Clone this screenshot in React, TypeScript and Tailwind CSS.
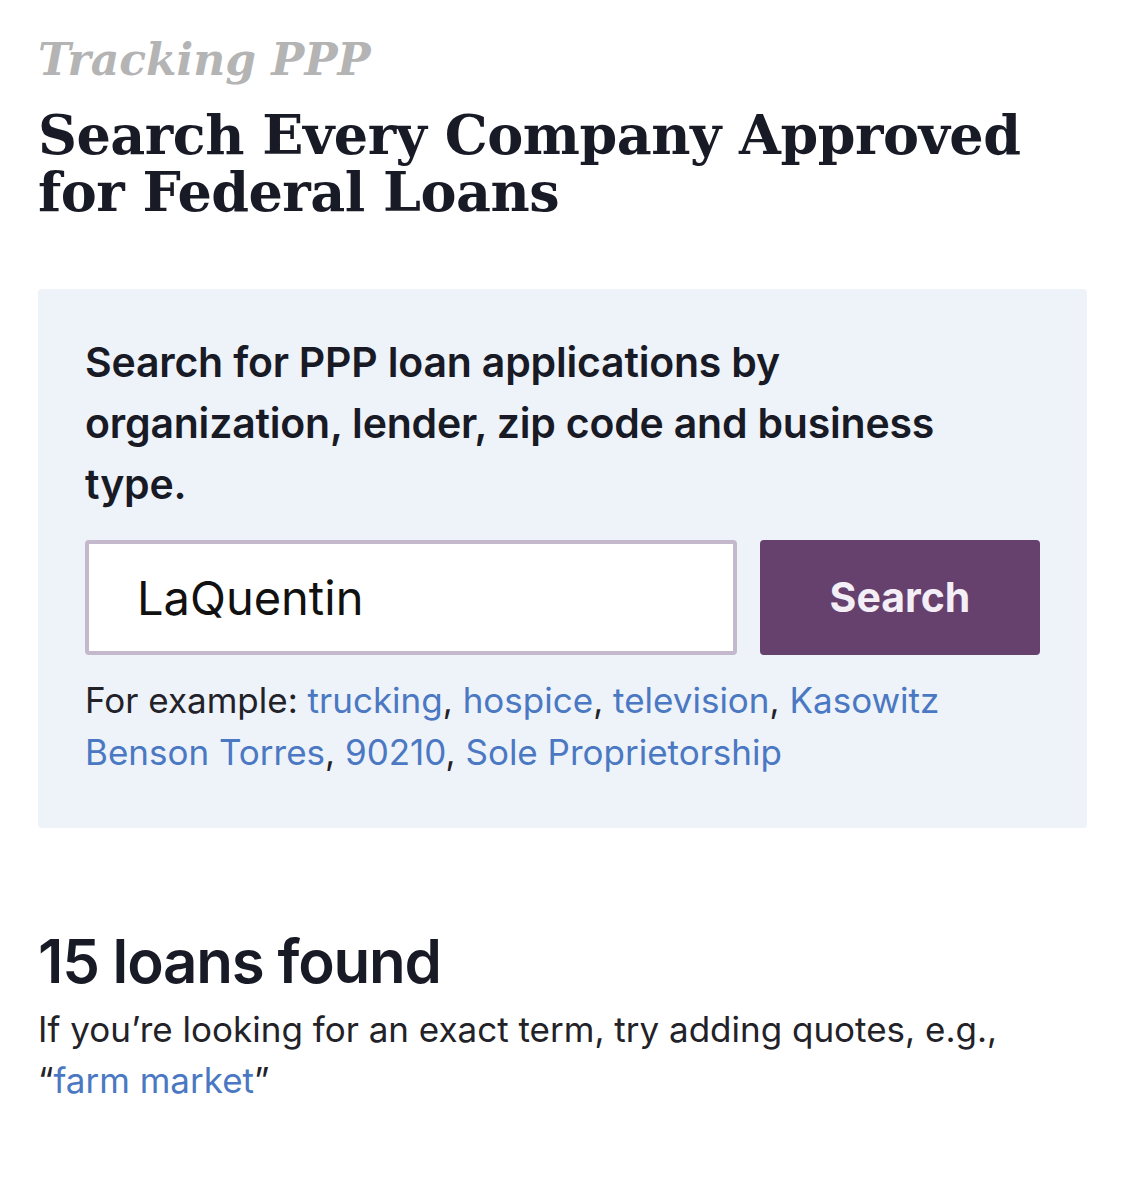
const SERIF = { fontFamily: '"DejaVu Serif", "Liberation Serif", serif' };

const EXAMPLES = [
  "trucking",
  "hospice",
  "television",
  "Kasowitz Benson Torres",
  "90210",
  "Sole Proprietorship",
];

function ExampleLinks() {
  return (
    <p className="mt-[19px] text-[35px] leading-[52px] text-[#222228]">
      For example:{" "}
      {EXAMPLES.map((term, i) => (
        <span key={term}>
          <a href="#" className="text-[#4a78c2]">
            {term}
          </a>
          {i < EXAMPLES.length - 1 ? ", " : ""}
        </span>
      ))}
    </p>
  );
}

export default function App() {
  return (
    <div
      className="min-h-[1200px] bg-white px-[38px] pt-[34px] text-[#181a25]"
      style={{ fontFamily: 'Inter, "Liberation Sans", sans-serif' }}
    >
      <p
        className="text-[44px] font-bold italic leading-[52px] text-[#b4b4b4]"
        style={SERIF}
      >
        Tracking PPP
      </p>
      <h1
        className="mt-[21px] text-[54px] font-bold leading-[57px] tracking-[-0.5px]"
        style={SERIF}
      >
        Search Every Company Approved for Federal Loans
      </h1>

      <section className="mt-[68px] w-[1049px] rounded-[4px] bg-[#eef2f9] px-[47px] pb-[50px] pt-[43px]">
        <p className="text-[41px] font-semibold leading-[61px] tracking-[-0.2px]">
          Search for PPP loan applications by organization, lender, zip code and
          business type.
        </p>
        <form
          className="mt-[25px] flex gap-[23px]"
          onSubmit={(e) => e.preventDefault()}
        >
          <input
            defaultValue="LaQuentin"
            className="h-[115px] w-[652px] rounded-[4px] border-[4px] border-[#c4b8cc] bg-white px-[48px] text-[47px] text-[#111] outline-none"
          />
          <button
            type="submit"
            className="h-[115px] w-[281px] rounded-[4px] bg-[#66416d] text-[41px] font-bold text-[#f4eef6]"
          >
            Search
          </button>
        </form>
        <ExampleLinks />
      </section>

      <h2 className="mt-[101px] text-[60px] font-semibold leading-[64px] tracking-[-1.2px]">
        15 loans found
      </h2>
      <p className="mt-[11px] w-[1010px] text-[35px] leading-[51px] text-[#222228]">
        If you’re looking for an exact term, try adding quotes, e.g., “
        <a href="#" className="text-[#4a78c2]">
          farm market
        </a>
        ”
      </p>
    </div>
  );
}
